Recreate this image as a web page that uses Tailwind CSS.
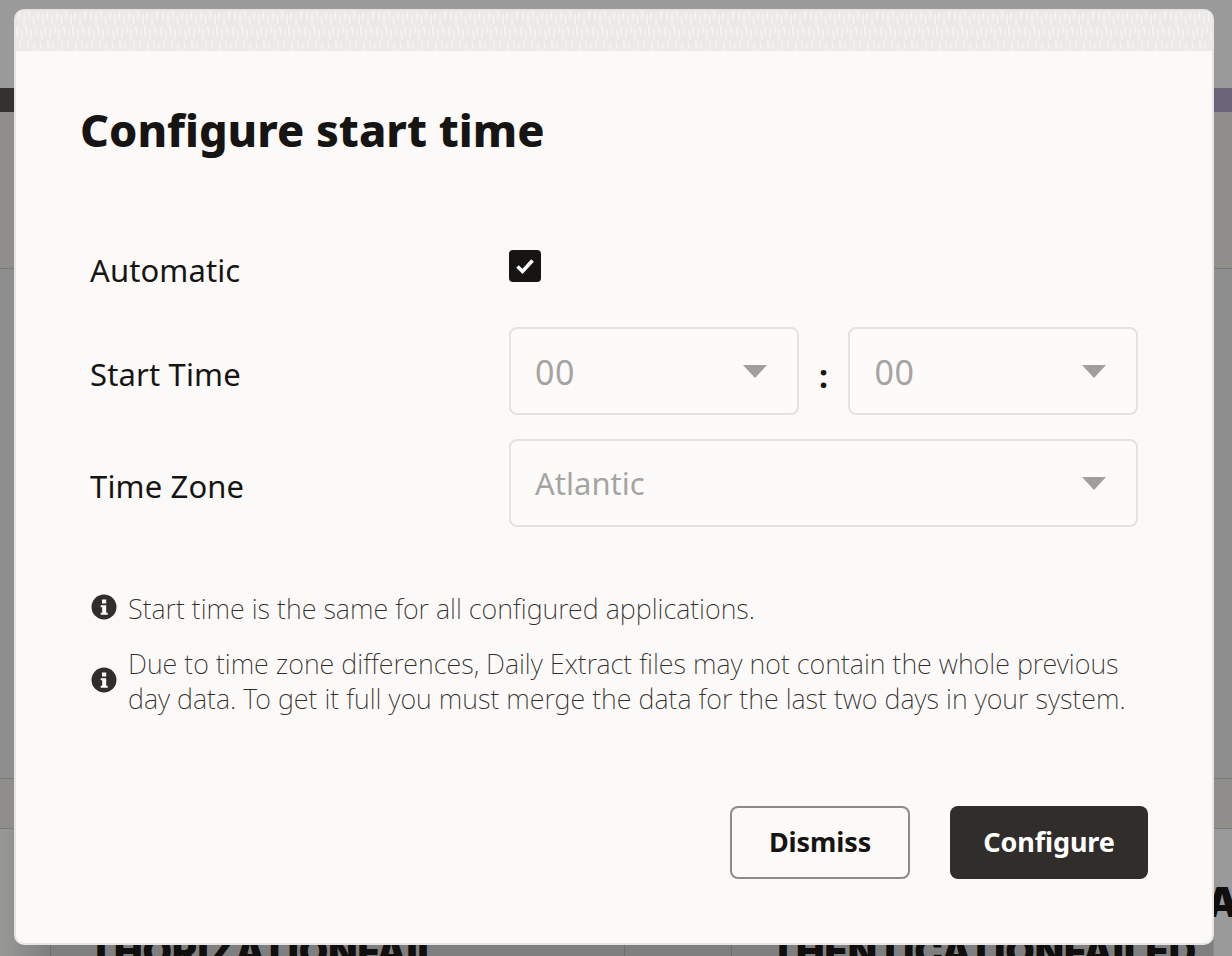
<!doctype html>
<html><head><meta charset="utf-8"><script src="https://cdn.jsdelivr.net/npm/@tailwindcss/browser@4"></script></head>
<body class="m-0 w-[1232px] h-[956px] overflow-hidden bg-[#8f8f8d] font-['Noto_Sans',sans-serif] text-[#161513]">
<div class="relative w-[1232px] h-[956px] overflow-hidden">
  <!-- page behind the dialog -->
  <div class="h-[88px] bg-[#9a9a9a]"></div>
  <div class="h-[24px] flex justify-between bg-[#8f8f8d]">
    <div class="w-[20px] bg-[#333230]"></div>
    <div class="w-[30px] bg-[#6c6478]"></div>
  </div>
  <div class="h-[157px] border-b border-[#7a7a78] bg-[#8f8e8b]"></div>
  <div class="h-[510px] border-b border-[#7a7a78] bg-[#8e8e8e]"></div>
  <div class="h-[50px] border-b border-[#7a7a78] bg-[#8f8e8b]"></div>
  <div class="relative h-[127px] bg-[linear-gradient(90deg,#989897,#7f7f7f_50px,#7f7f7f_1213px,#9a9a9a_1214px)]">
    <div class="absolute left-[50px] top-0 bottom-0 w-px bg-[#6f6e6c]"></div>
    <div class="absolute left-[624px] top-0 bottom-0 w-px bg-[#6f6e6c]"></div>
    <div class="absolute left-[731px] top-0 bottom-0 w-px bg-[#6f6e6c]"></div>
    <span class="absolute left-[88px] top-[100px] text-[38px] leading-[44px] font-black font-['Inter',sans-serif] whitespace-nowrap text-[#100f0e]">THORIZATIONFAIL</span>
    <span class="absolute left-[770px] top-[100px] text-[38px] leading-[44px] font-black font-['Inter',sans-serif] whitespace-nowrap text-[#100f0e]">THENTICATIONFAILED</span>
    <span class="absolute left-[1206px] top-[51px] text-[41px] leading-[44px] font-black font-['Inter',sans-serif] text-[#100f0e]">A</span>
  </div>

  <!-- dialog -->
  <div class="absolute left-[14px] top-[9px] w-[1200px] h-[936px] flex flex-col rounded-[10px] border-2 border-[#e6e5e3] bg-[#fbfaf8] overflow-hidden">
    <svg class="block w-full h-[40px] shrink-0 bg-[#ebeae8]" xmlns="http://www.w3.org/2000/svg">
      <defs><pattern id="tex" width="72" height="40" patternUnits="userSpaceOnUse">
        <g stroke="#fbfaf8" stroke-width="1.5" stroke-linecap="round" opacity="0.6" fill="none">
          <path d="M3 2v7M8 5v8M13 1v6M17 6l1 8M22 2v6M27 4v9M31 1l1 7M36 6v7M41 2v8M45 5l1 7M50 1v6M55 4v9M59 2v7M64 6v7M69 1v8"/>
          <path d="M1 17v8M6 20v7M10 15l1 8M15 19v9M20 16v7M25 20l1 8M29 16v7M34 18v9M39 15v8M43 20v8M48 16l1 8M53 19v7M57 15v9M62 19v8M67 16v7"/>
          <path d="M4 31v6M12 30v7M18 32v6M24 31l1 6M32 30v7M37 32v5M46 31v7M52 30v6M60 32v6M66 30v7M71 32v5"/>
        </g>
      </pattern></defs>
      <rect width="100%" height="100%" fill="url(#tex)"/>
    </svg>
    <div class="flex-1 flex flex-col pl-[64px] pr-[64px]">
      <h1 class="mt-[49px] text-[45px] leading-[60px] font-extrabold whitespace-nowrap">Configure start time</h1>

      <div class="mt-[93px] pl-[10px] grid grid-cols-[419px_629px] grid-rows-[50px_88px_88px] gap-y-[24px]">
        <div class="text-[31px] leading-[40px] mt-[-3px] tracking-[0.1px]">Automatic</div>
        <div class="w-[32px] h-[32px] mt-[-3px] rounded-[4px] bg-[#161513] flex items-center justify-center">
          <svg viewBox="0 0 32 32" class="w-[32px] h-[32px]"><path d="M8.5 16.5l5 5 10-11" fill="none" stroke="#fff" stroke-width="3.6"/></svg>
        </div>

        <div class="text-[31px] leading-[40px] self-center pt-[6px] tracking-[0.15px]">Start Time</div>
        <div class="flex items-center">
          <div class="w-[290px] h-[88px] rounded-[8px] border-2 border-[#e4e3e1] bg-[#fcfbfa] flex items-center justify-between pl-[24px] pr-[30px] text-[34px] text-[#a5a4a2]">
            <span class="tracking-[0.5px] mt-[2px]">00</span>
            <svg class="w-[24px] h-[13px]" viewBox="0 0 24 13"><path d="M0 0h24L12 13z" fill="#a19f9c"/></svg>
          </div>
          <span class="w-[50px] text-center text-[32px] leading-[40px] font-bold mt-[10px]">:</span>
          <div class="w-[290px] h-[88px] rounded-[8px] border-2 border-[#e4e3e1] bg-[#fcfbfa] flex items-center justify-between pl-[24px] pr-[30px] text-[34px] text-[#a5a4a2]">
            <span class="tracking-[0.5px] mt-[2px]">00</span>
            <svg class="w-[24px] h-[13px]" viewBox="0 0 24 13"><path d="M0 0h24L12 13z" fill="#a19f9c"/></svg>
          </div>
        </div>

        <div class="text-[31px] leading-[40px] self-center pt-[6px] tracking-[0.15px]">Time Zone</div>
        <div class="w-[629px] h-[88px] rounded-[8px] border-2 border-[#e4e3e1] bg-[#fcfbfa] flex items-center justify-between pl-[24px] pr-[30px] text-[31px] text-[#a5a4a2]">
          <span>Atlantic</span>
          <svg class="w-[24px] h-[13px]" viewBox="0 0 24 13"><path d="M0 0h24L12 13z" fill="#a19f9c"/></svg>
        </div>
      </div>

      <div class="mt-[64px] pl-[10px] flex flex-col gap-[20px] text-[27px] leading-[35px] font-extralight text-[#312d2a]">
        <div class="flex items-center">
          <svg class="w-[26px] h-[26px] shrink-0 -mt-[3px] ml-[1px] mr-[11px]" viewBox="0 0 26 26"><circle cx="13" cy="13" r="12.5" fill="#312d2a"/><rect x="11" y="5.5" width="4.2" height="4" fill="#fff"/><path d="M9.7 11.3h5.5v7.5h1.5v2h-7v-2h1.5v-5.5h-1.5z" fill="#fff"/></svg>
          <span class="whitespace-nowrap">Start time is the same for all configured applications.</span>
        </div>
        <div class="flex items-center">
          <svg class="w-[26px] h-[26px] shrink-0 -mt-[3px] ml-[1px] mr-[11px]" viewBox="0 0 26 26"><circle cx="13" cy="13" r="12.5" fill="#312d2a"/><rect x="11" y="5.5" width="4.2" height="4" fill="#fff"/><path d="M9.7 11.3h5.5v7.5h1.5v2h-7v-2h1.5v-5.5h-1.5z" fill="#fff"/></svg>
          <span class="whitespace-nowrap">Due to time zone differences, Daily Extract files may not contain the whole previous<br>day data. To get it full you must merge the data for the last two days in your system.</span>
        </div>
      </div>

      <div class="mt-auto mb-[64px] self-end flex gap-[40px] text-[27px] font-bold tracking-[-0.1px]">
        <button class="w-[180px] h-[73px] rounded-[8px] border-2 border-[#8c8b89] text-[#161513]">Dismiss</button>
        <button class="w-[198px] h-[73px] rounded-[8px] bg-[#312d2a] text-white">Configure</button>
      </div>
    </div>
  </div>
</div>
</body></html>
